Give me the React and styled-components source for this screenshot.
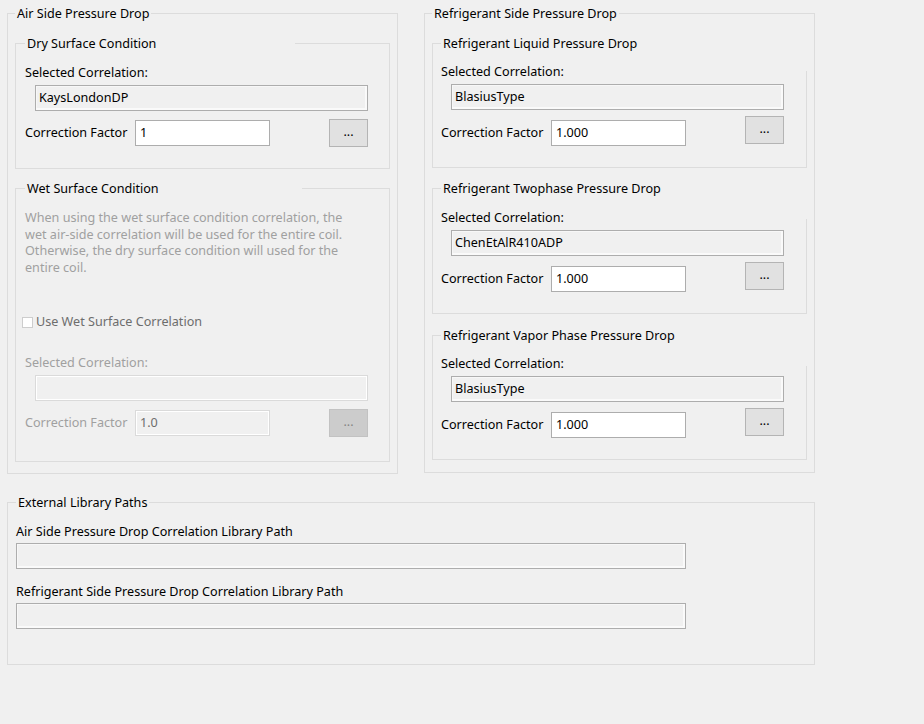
import React from "react"
import styled, { createGlobalStyle, css } from "styled-components"

const GlobalStyle = createGlobalStyle`
  html, body {
    margin: 0;
    background: #f0f0f0;
  }
  body {
    font-family: "Noto Sans", "Segoe UI", sans-serif;
    font-size: 12.6px;
    color: #000;
  }
  * {
    box-sizing: border-box;
  }
`

const Page = styled.div`
  width: 924px;
  height: 724px;
  padding: 13px 0 0 7px;
`

const Columns = styled.div`
  display: flex;
  align-items: flex-start;
  gap: 26px;
  width: 808px;
`

// group box: border with a title laid over its top line
const Group = styled.div`
  position: relative;
  border: 1px solid #dcdcdc;
  padding: ${p => p.$pad};
  margin-top: ${p => p.$top || 0}px;
  width: ${p => (p.$width ? p.$width + "px" : "auto")};
  ${p => p.$rightFrom && css`
    border-right-color: transparent;
    &::after {
      content: "";
      position: absolute;
      right: -1px;
      top: ${p.$rightFrom}px;
      bottom: -1px;
      width: 1px;
      background: #dcdcdc;
    }
  `}
`

const Title = styled.div`
  margin: -9px ${p => (p.$wide ? `-${p.$wide}px` : 0)} ${p => p.$gap}px 0;
  width: ${p => (p.$width ? p.$width + "px" : p.$wide ? "auto" : "fit-content")};
  height: 17px;
  padding: 0 2px;
  line-height: 17px;
  background: #f0f0f0;
  white-space: nowrap;
`

const Label = styled.div`
  margin-top: ${p => p.$top || 0}px;
  line-height: 16px;
  color: ${p => (p.$off ? "#a0a0a0" : "#000")};
  white-space: nowrap;
`

const Note = styled.p`
  margin: 0;
  line-height: 16.5px;
  color: #a0a0a0;
  white-space: pre-line;
`

const fieldKinds = {
  read: css`
    border-color: #adadad;
    background: #f0f0f0;
    box-shadow: inset -2px -2px 0 #fafafa, inset 1px 1px 0 #f7f7f7;
    padding-left: 3px;
  `,
  edit: css`
    border-color: #adadad;
    background: #fff;
  `,
  off: css`
    border-color: #dadada;
    background: #f0f0f0;
    box-shadow: inset 0 0 0 1px #fff;
    color: #6d6d6d;
  `,
}

const Field = styled.div`
  flex: none;
  width: ${p => p.$w}px;
  height: 26px;
  margin: ${p => p.$m || 0};
  padding: 0 4px;
  border: 1px solid;
  line-height: 24px;
  white-space: nowrap;
  ${p => fieldKinds[p.$kind]}
`

const FactorRow = styled.div`
  display: flex;
  align-items: center;
  margin-top: ${p => p.$top}px;
`

const FactorLabel = styled(Label)`
  flex: none;
  width: 110px;
`

const DotsButton = styled.button`
  flex: none;
  width: 39px;
  height: 28px;
  margin: 0 0 ${p => p.$lift || 0}px auto;
  padding: 0 0 3px;
  border: 1px solid #b4b4b4;
  background: #e1e1e1;
  font: 12.6px "Noto Sans", sans-serif;
  color: #000;

  &:disabled {
    background: #cccccc;
    border-color: #c2c2c2;
    color: #858585;
  }
`

const CheckRow = styled.label`
  display: flex;
  align-items: center;
  gap: 3px;
  margin: 38px 0 0 -3px;
  line-height: 16px;
  color: #6d6d6d;
`

const CheckBox = styled.span`
  width: 11px;
  height: 11px;
  border: 1px solid #cdcdcd;
  background: #fff;
`

const refrigerantGroups = [
  { title: "Refrigerant Liquid Pressure Drop", value: "BlasiusType", top: 0, gap: 12, rightFrom: 27 },
  { title: "Refrigerant Twophase Pressure Drop", value: "ChenEtAlR410ADP", top: 20, gap: 13, rightFrom: 30 },
  { title: "Refrigerant Vapor Phase Pressure Drop", value: "BlasiusType", top: 21, gap: 12, rightFrom: 30 },
]

export default function App() {
  return (
    <Page>
      <GlobalStyle />
      <Columns>
        <Group $width={391} $pad="0 7px 11px 7px">
          <Title $gap={21}>Air Side Pressure Drop</Title>

          <Group $pad="0 21px 21px 9px">
            <Title $gap={13} $width={270}>Dry Surface Condition</Title>
            <Label>Selected Correlation:</Label>
            <Field $kind="read" $w={333} $m="4px 0 0 10px">KaysLondonDP</Field>
            <FactorRow $top={8}>
              <FactorLabel>Correction Factor</FactorLabel>
              <Field $kind="edit" $w={135}>1</Field>
              <DotsButton>...</DotsButton>
            </FactorRow>
          </Group>

          <Group $top={19} $pad="0 21px 24px 9px">
            <Title $gap={13} $width={277}>Wet Surface Condition</Title>
            <Note>
              {"When using the wet surface condition correlation, the\nwet air-side correlation will be used for the entire coil.\nOtherwise, the dry surface condition will used for the\nentire coil."}
            </Note>
            <CheckRow>
              <CheckBox />
              Use Wet Surface Correlation
            </CheckRow>
            <Label $off $top={25}>Selected Correlation:</Label>
            <Field $kind="off" $w={333} $m="4px 0 0 10px" />
            <FactorRow $top={8}>
              <FactorLabel $off>Correction Factor</FactorLabel>
              <Field $kind="off" $w={135}>1.0</Field>
              <DotsButton disabled>...</DotsButton>
            </FactorRow>
          </Group>
        </Group>

        <Group $width={391} $pad="0 7px 12px 7px">
          <Title $gap={21}>Refrigerant Side Pressure Drop</Title>
          {refrigerantGroups.map(g => (
            <Group key={g.title} $top={g.top} $pad="0 22px 17px 8px" $rightFrom={g.rightFrom}>
              <Title $gap={g.gap} $wide={23}>{g.title}</Title>
              <Label>Selected Correlation:</Label>
              <Field $kind="read" $w={333} $m="4px 0 0 10px">{g.value}</Field>
              <FactorRow $top={6}>
                <FactorLabel>Correction Factor</FactorLabel>
                <Field $kind="edit" $w={135}>1.000</Field>
                <DotsButton $lift={6}>...</DotsButton>
              </FactorRow>
            </Group>
          ))}
        </Group>
      </Columns>

      <Group $width={808} $top={28} $pad="0 8px 35px 8px">
        <Title $gap={13}>External Library Paths</Title>
        <Label>Air Side Pressure Drop Correlation Library Path</Label>
        <Field $kind="read" $w={670} $m="3px 0 0 0" />
        <Label $top={15}>Refrigerant Side Pressure Drop Correlation Library Path</Label>
        <Field $kind="read" $w={670} $m="3px 0 0 0" />
      </Group>
    </Page>
  )
}
